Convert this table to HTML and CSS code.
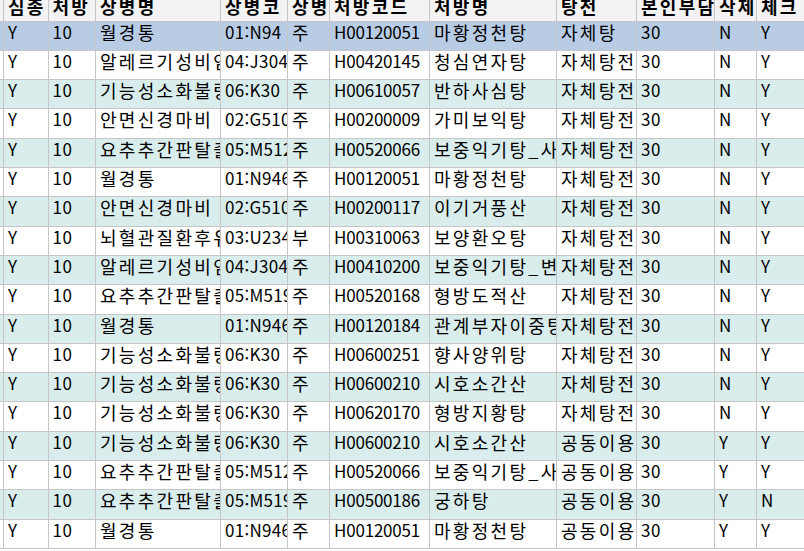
FILE: index.html
```html
<!DOCTYPE html>
<html lang="ko">
<head>
<meta charset="utf-8">
<title>처방 목록</title>
<link rel="stylesheet" href="styles.css">
</head>
<body>
<div class="grid">
  <div class="row head">
    <div class="c stub"></div><div class="c">심종</div><div class="c">처방</div><div class="c">상병명</div><div class="c">상병코</div><div class="c">상병</div><div class="c">처방코드</div><div class="c">처방명</div><div class="c">탕전</div><div class="c">본인부담</div><div class="c">삭제</div><div class="c">체크</div>
  </div>
  <div class="row sel">
    <div class="c stub"></div><div class="c">Y</div><div class="c">10</div><div class="c">월경통</div><div class="c">01:N94</div><div class="c">주</div><div class="c">H00120051</div><div class="c">마황정천탕</div><div class="c">자체탕</div><div class="c">30</div><div class="c">N</div><div class="c">Y</div>
  </div>
  <div class="row">
    <div class="c stub"></div><div class="c">Y</div><div class="c">10</div><div class="c">알레르기성비염</div><div class="c">04:J304</div><div class="c">주</div><div class="c">H00420145</div><div class="c">청심연자탕</div><div class="c">자체탕전</div><div class="c">30</div><div class="c">N</div><div class="c">Y</div>
  </div>
  <div class="row alt">
    <div class="c stub"></div><div class="c">Y</div><div class="c">10</div><div class="c">기능성소화불량</div><div class="c">06:K30</div><div class="c">주</div><div class="c">H00610057</div><div class="c">반하사심탕</div><div class="c">자체탕전</div><div class="c">30</div><div class="c">N</div><div class="c">Y</div>
  </div>
  <div class="row">
    <div class="c stub"></div><div class="c">Y</div><div class="c">10</div><div class="c">안면신경마비</div><div class="c">02:G510</div><div class="c">주</div><div class="c">H00200009</div><div class="c">가미보익탕</div><div class="c">자체탕전</div><div class="c">30</div><div class="c">N</div><div class="c">Y</div>
  </div>
  <div class="row alt">
    <div class="c stub"></div><div class="c">Y</div><div class="c">10</div><div class="c">요추추간판탈출</div><div class="c">05:M512</div><div class="c">주</div><div class="c">H00520066</div><div class="c">보중익기탕_사물탕</div><div class="c">자체탕전</div><div class="c">30</div><div class="c">N</div><div class="c">Y</div>
  </div>
  <div class="row">
    <div class="c stub"></div><div class="c">Y</div><div class="c">10</div><div class="c">월경통</div><div class="c">01:N946</div><div class="c">주</div><div class="c">H00120051</div><div class="c">마황정천탕</div><div class="c">자체탕전</div><div class="c">30</div><div class="c">N</div><div class="c">Y</div>
  </div>
  <div class="row alt">
    <div class="c stub"></div><div class="c">Y</div><div class="c">10</div><div class="c">안면신경마비</div><div class="c">02:G510</div><div class="c">주</div><div class="c">H00200117</div><div class="c">이기거풍산</div><div class="c">자체탕전</div><div class="c">30</div><div class="c">N</div><div class="c">Y</div>
  </div>
  <div class="row">
    <div class="c stub"></div><div class="c">Y</div><div class="c">10</div><div class="c">뇌혈관질환후유증</div><div class="c">03:U2341</div><div class="c">부</div><div class="c">H00310063</div><div class="c">보양환오탕</div><div class="c">자체탕전</div><div class="c">30</div><div class="c">N</div><div class="c">Y</div>
  </div>
  <div class="row alt">
    <div class="c stub"></div><div class="c">Y</div><div class="c">10</div><div class="c">알레르기성비염</div><div class="c">04:J304</div><div class="c">주</div><div class="c">H00410200</div><div class="c">보중익기탕_변방</div><div class="c">자체탕전</div><div class="c">30</div><div class="c">N</div><div class="c">Y</div>
  </div>
  <div class="row">
    <div class="c stub"></div><div class="c">Y</div><div class="c">10</div><div class="c">요추추간판탈출</div><div class="c">05:M519</div><div class="c">주</div><div class="c">H00520168</div><div class="c">형방도적산</div><div class="c">자체탕전</div><div class="c">30</div><div class="c">N</div><div class="c">Y</div>
  </div>
  <div class="row alt">
    <div class="c stub"></div><div class="c">Y</div><div class="c">10</div><div class="c">월경통</div><div class="c">01:N946</div><div class="c">주</div><div class="c">H00120184</div><div class="c">관계부자이중탕</div><div class="c">자체탕전</div><div class="c">30</div><div class="c">N</div><div class="c">Y</div>
  </div>
  <div class="row">
    <div class="c stub"></div><div class="c">Y</div><div class="c">10</div><div class="c">기능성소화불량</div><div class="c">06:K30</div><div class="c">주</div><div class="c">H00600251</div><div class="c">향사양위탕</div><div class="c">자체탕전</div><div class="c">30</div><div class="c">N</div><div class="c">Y</div>
  </div>
  <div class="row alt">
    <div class="c stub"></div><div class="c">Y</div><div class="c">10</div><div class="c">기능성소화불량</div><div class="c">06:K30</div><div class="c">주</div><div class="c">H00600210</div><div class="c">시호소간산</div><div class="c">자체탕전</div><div class="c">30</div><div class="c">N</div><div class="c">Y</div>
  </div>
  <div class="row">
    <div class="c stub"></div><div class="c">Y</div><div class="c">10</div><div class="c">기능성소화불량</div><div class="c">06:K30</div><div class="c">주</div><div class="c">H00620170</div><div class="c">형방지황탕</div><div class="c">자체탕전</div><div class="c">30</div><div class="c">N</div><div class="c">Y</div>
  </div>
  <div class="row alt">
    <div class="c stub"></div><div class="c">Y</div><div class="c">10</div><div class="c">기능성소화불량</div><div class="c">06:K30</div><div class="c">주</div><div class="c">H00600210</div><div class="c">시호소간산</div><div class="c">공동이용탕전</div><div class="c">30</div><div class="c">Y</div><div class="c">Y</div>
  </div>
  <div class="row">
    <div class="c stub"></div><div class="c">Y</div><div class="c">10</div><div class="c">요추추간판탈출</div><div class="c">05:M512</div><div class="c">주</div><div class="c">H00520066</div><div class="c">보중익기탕_사물탕</div><div class="c">공동이용탕전</div><div class="c">30</div><div class="c">Y</div><div class="c">Y</div>
  </div>
  <div class="row alt">
    <div class="c stub"></div><div class="c">Y</div><div class="c">10</div><div class="c">요추추간판탈출</div><div class="c">05:M519</div><div class="c">주</div><div class="c">H00500186</div><div class="c">궁하탕</div><div class="c">공동이용탕전</div><div class="c">30</div><div class="c">Y</div><div class="c">N</div>
  </div>
  <div class="row">
    <div class="c stub"></div><div class="c">Y</div><div class="c">10</div><div class="c">월경통</div><div class="c">01:N946</div><div class="c">주</div><div class="c">H00120051</div><div class="c">마황정천탕</div><div class="c">공동이용탕전</div><div class="c">30</div><div class="c">Y</div><div class="c">Y</div>
  </div>
</div>
</body>
</html>
```

FILE: styles.css
```css
html, body {
  margin: 0;
  padding: 0;
  background: #ffffff;
  overflow: hidden;
}

body {
  font-family: "Noto Sans CJK KR", "Noto Sans", sans-serif;
  font-size: 17px;
  color: #000000;
}

.grid {
  margin-top: -7px;
}

.row {
  display: grid;
  grid-template-columns: 4px 44.5px 47.5px 125px 67px 42px 100px 127px 80px 78px 42px 1fr;
  height: 29.3px;
  box-sizing: border-box;
  border-bottom: 1px solid #c6c6c6;
  background: #ffffff;
}

.row.alt {
  background: #daeded;
}

.row.sel {
  background: #b8cce6;
}

.row.head {
  height: 28.6px;
  background: #f3f3f3;
  font-weight: bold;
}

.c {
  box-sizing: border-box;
  border-right: 1px solid #c6c6c6;
  padding: 1px 0 0 4px;
  line-height: 18px;
  white-space: nowrap;
  overflow: hidden;
  letter-spacing: 0.5px;
}

.c:last-child {
  border-right: 0;
}

.c.stub {
  padding: 0;
}

.row .c:nth-child(5) {
  letter-spacing: 0.3px;
}

.row .c:nth-child(7) {
  letter-spacing: -0.2px;
}

.row .c:nth-child(4),
.row .c:nth-child(6),
.row .c:nth-child(8),
.row .c:nth-child(9),
.row.head .c {
  font-size: 18px;
  letter-spacing: 2.3px;
}

.row.head .c {
  padding-top: 4px;
}
```
